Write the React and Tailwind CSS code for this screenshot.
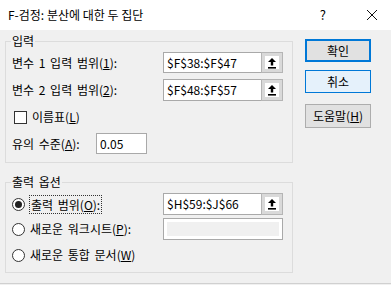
import React from "react";

const font = { fontFamily: '"Noto Sans CJK KR", "Noto Sans", sans-serif' };

function PickButton() {
  return (
    <div className="w-[22px] h-full bg-[#d9d9d9] border border-[#b5b5b5] p-[3px] flex">
      <div className="flex-1 bg-white flex items-center justify-center">
        <svg width="10" height="12" viewBox="0 0 10 12">
          <path d="M5 1 L9 5 L6.2 5 L6.2 8.5 L3.8 8.5 L3.8 5 L1 5 Z" fill="#000" />
          <rect x="1" y="10" width="8" height="1.6" fill="#000" />
        </svg>
      </div>
    </div>
  );
}

function RangeInput({ value }) {
  return (
    <div className="flex h-full">
      <div className="w-[98px] h-full bg-white border border-[#a9a9a9] border-r-0 flex items-center pl-[3px] text-[12px] leading-none">
        {value}
      </div>
      <PickButton />
    </div>
  );
}

function Radio({ checked }) {
  return (
    <div className="w-[13px] h-[13px] rounded-full border border-[#333] bg-white flex items-center justify-center shrink-0">
      {checked && <div className="w-[7px] h-[7px] rounded-full bg-[#222]" />}
    </div>
  );
}

export default function App() {
  return (
    <div className="w-[391px] h-[285px] bg-[#f0f0f0] text-black flex flex-col overflow-hidden" style={font}>
      {/* title bar */}
      <div className="h-[30px] bg-white flex items-center pl-[8px] text-[12px] shrink-0">
        <span>F-검정: 분산에 대한 두 집단</span>
        <span className="ml-auto mr-[40px] text-[13px]">?</span>
        <svg width="12" height="12" viewBox="0 0 12 12" className="mr-[13px]">
          <path d="M1 1 L11 11 M11 1 L1 11" stroke="#111" strokeWidth="1" />
        </svg>
      </div>

      <div className="flex flex-1 [word-spacing:2px]">
        {/* left column */}
        <div className="pl-[5px] w-[293px]">
          <fieldset className="mt-[3px] border border-[#dcdcdc] px-[6px] pb-[8px]">
            <legend className="text-[12px] leading-[16px] px-[1px] -ml-[1px]">입력</legend>
            <div className="mt-[3px] h-[21px] flex items-center text-[12px]">
              <span className="w-[151px]">변수 1 입력 범위(<u>1</u>):</span>
              <RangeInput value="$F$38:$F$47" />
            </div>
            <div className="mt-[6px] h-[22px] flex items-center text-[12px]">
              <span className="w-[151px]">변수 2 입력 범위(<u>2</u>):</span>
              <RangeInput value="$F$48:$F$57" />
            </div>
            <div className="mt-[5px] h-[22px] flex items-center text-[12px] pl-[2px]">
              <div className="w-[13px] h-[13px] border border-[#333] bg-white" />
              <span className="ml-[5px]">이름표(<u>L</u>)</span>
            </div>
            <div className="mt-[5px] h-[21px] flex items-center text-[12px]">
              <span className="w-[84px]">유의 수준(<u>A</u>):</span>
              <div className="w-[51px] h-full bg-white border border-[#a9a9a9] flex items-center pl-[3px] leading-none">
                0.05
              </div>
            </div>
          </fieldset>

          <fieldset className="mt-[11px] border border-[#dcdcdc] px-[6px] pb-[6px]">
            <legend className="text-[12px] leading-[16px] px-[1px] -ml-[1px]">출력 옵션</legend>
            <div className="mt-[3px] h-[22px] flex items-center text-[12px]">
              <div className="w-[151px] flex items-center">
                <Radio checked />
                <span className="ml-[4px] border border-dotted border-[#333] px-[1px] leading-[17px]">
                  출력 범위(<u>O</u>):
                </span>
              </div>
              <RangeInput value="$H$59:$J$66" />
            </div>
            <div className="mt-[3px] h-[22px] flex items-center text-[12px]">
              <div className="w-[151px] flex items-center">
                <Radio />
                <span className="ml-[5px]">새로운 워크시트(<u>P</u>):</span>
              </div>
              <div className="w-[120px] h-full bg-white border border-[#a9a9a9] p-[3px] flex">
                <div className="flex-1 bg-[#f0f0f0]" />
              </div>
            </div>
            <div className="mt-[4px] h-[22px] flex items-center text-[12px]">
              <Radio />
              <span className="ml-[5px]">새로운 통합 문서(<u>W</u>)</span>
            </div>
          </fieldset>
        </div>

        {/* buttons */}
        <div className="ml-[12px] mt-[9px] flex flex-col w-[66px] text-[12px]">
          <div className="h-[23px] bg-[#e1e1e1] border-2 border-[#0078d7] flex items-center justify-center">
            확인
          </div>
          <div className="mt-[8px] h-[23px] bg-[#e5f1fb] border border-[#0078d7] flex items-center justify-center">
            취소
          </div>
          <div className="mt-[11px] h-[24px] bg-[#e1e1e1] border border-[#adadad] flex items-center justify-center">
            도움말(<u>H</u>)
          </div>
        </div>
      </div>
      <div className="h-[2px] border-t border-[#d0d0d0] shrink-0" />
    </div>
  );
}
